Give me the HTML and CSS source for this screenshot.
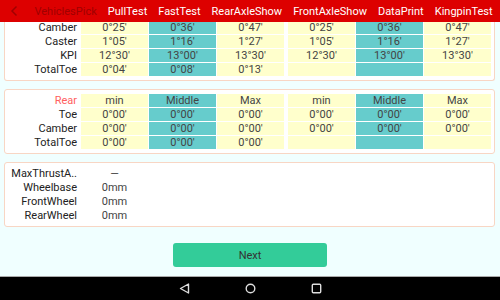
FILE: index.html
```html
<!DOCTYPE html>
<html>
<head>
    <title>FastTest</title>
    <link rel="stylesheet" href="styles.css">
</head>
<body>

<div class="topbar">
    <svg class="back" width="8" height="12" viewBox="0 0 8 12"><path d="M6.5 1.5 L2 6 L6.5 10.5" fill="none" stroke="#a00000" stroke-width="1.5"/></svg>
    <span class="tab dim">VehiclesPick</span>
    <span class="tab">PullTest</span>
    <span class="tab">FastTest</span>
    <span class="tab">RearAxleShow</span>
    <span class="tab">FrontAxleShow</span>
    <span class="tab">DataPrint</span>
    <span class="tab">KingpinTest</span>
</div>

<div class="scroll">

    <div class="card first">
        <div class="row">
            <span class="lbl">Camber</span>
            <span class="cell y">0°25'</span><span class="cell t">0°36'</span><span class="cell y">0°47'</span>
            <span class="cell y split">0°25'</span><span class="cell t">0°36'</span><span class="cell y">0°47'</span>
        </div>
        <div class="row">
            <span class="lbl">Caster</span>
            <span class="cell y">1°05'</span><span class="cell t">1°16'</span><span class="cell y">1°27'</span>
            <span class="cell y split">1°05'</span><span class="cell t">1°16'</span><span class="cell y">1°27'</span>
        </div>
        <div class="row">
            <span class="lbl">KPI</span>
            <span class="cell y">12°30'</span><span class="cell t">13°00'</span><span class="cell y">13°30'</span>
            <span class="cell y split">12°30'</span><span class="cell t">13°00'</span><span class="cell y">13°30'</span>
        </div>
        <div class="row">
            <span class="lbl">TotalToe</span>
            <span class="cell y">0°04'</span><span class="cell t">0°08'</span><span class="cell y">0°13'</span>
            <span class="cell y split"></span><span class="cell t"></span><span class="cell y"></span>
        </div>
    </div>

    <div class="card">
        <div class="row">
            <span class="lbl red">Rear</span>
            <span class="cell y">min</span><span class="cell t">Middle</span><span class="cell y">Max</span>
            <span class="cell y split">min</span><span class="cell t">Middle</span><span class="cell y">Max</span>
        </div>
        <div class="row">
            <span class="lbl">Toe</span>
            <span class="cell y">0°00'</span><span class="cell t">0°00'</span><span class="cell y">0°00'</span>
            <span class="cell y split">0°00'</span><span class="cell t">0°00'</span><span class="cell y">0°00'</span>
        </div>
        <div class="row">
            <span class="lbl">Camber</span>
            <span class="cell y">0°00'</span><span class="cell t">0°00'</span><span class="cell y">0°00'</span>
            <span class="cell y split">0°00'</span><span class="cell t">0°00'</span><span class="cell y">0°00'</span>
        </div>
        <div class="row">
            <span class="lbl">TotalToe</span>
            <span class="cell y">0°00'</span><span class="cell t">0°00'</span><span class="cell y">0°00'</span>
            <span class="cell y split"></span><span class="cell t"></span><span class="cell y"></span>
        </div>
    </div>

    <div class="card">
        <div class="row">
            <span class="lbl">MaxThrustA..</span>
            <span class="cell">—</span>
        </div>
        <div class="row">
            <span class="lbl">Wheelbase</span>
            <span class="cell">0mm</span>
        </div>
        <div class="row">
            <span class="lbl">FrontWheel</span>
            <span class="cell">0mm</span>
        </div>
        <div class="row">
            <span class="lbl">RearWheel</span>
            <span class="cell">0mm</span>
        </div>
    </div>

    <div class="actions">
        <button class="next">Next</button>
    </div>

</div>

<div class="navbar">
    <svg width="11" height="11" viewBox="0 0 11 11"><path d="M9.5 1 L9.5 10 L1.5 5.5 Z" fill="none" stroke="#ddd" stroke-width="1.4" stroke-linejoin="round"/></svg>
    <svg width="11" height="11" viewBox="0 0 11 11"><circle cx="5.5" cy="5.5" r="4.3" fill="none" stroke="#ddd" stroke-width="1.4"/></svg>
    <svg width="11" height="11" viewBox="0 0 11 11"><rect x="1.3" y="1.3" width="8.4" height="8.4" rx="1" fill="none" stroke="#ddd" stroke-width="1.4"/></svg>
</div>

</body>
</html>
```

FILE: styles.css
```css
BODY {
    margin: 0;
    width: 500px;
    height: 300px;
    overflow: hidden;
    background-color: #f0ffff;
    font-family: Roboto, "Liberation Sans", sans-serif;
    font-size: 11px;
    color: #222;
    display: flex;
    flex-direction: column;
}

.topbar {
    height: 22px;
    flex: none;
    background-color: #dd0000;
    display: flex;
    align-items: center;
    overflow: hidden;
    color: #fff;
    font-size: 11px;
}

.topbar > * {
    flex: none;
}

.topbar .back {
    margin-left: 10px;
    margin-right: 11px;
}

.tab {
    padding: 0 5.5px;
    white-space: nowrap;
}

.tab.dim {
    color: #a00000;
}

.scroll {
    flex: 1;
    overflow: hidden;
    display: flex;
    flex-direction: column;
}

.card {
    margin: 8px 5px 0 4px;
    padding: 4px 3px 4px 0;
    background-color: #fff;
    border: 1px solid #f8d6c4;
    border-radius: 3px;
    display: flex;
    flex-direction: column;
    gap: 1px;
}

.card.first {
    margin-top: -1px;
    padding-top: 0;
    border-top: 0;
    border-radius: 0 0 3px 3px;
}

.row {
    display: flex;
    gap: 1px;
    height: 13px;
    line-height: 13px;
}

.lbl {
    width: 72px;
    padding-right: 3px;
    text-align: right;
    white-space: nowrap;
}

.lbl.red {
    color: #ff6060;
}

.cell {
    width: 67px;
    text-align: center;
    color: #444;
}

.cell.y {
    background-color: #ffffcc;
}

.cell.t {
    background-color: #66cccc;
}

.cell.split {
    margin-left: 3px;
}

.actions {
    display: flex;
    justify-content: center;
    margin-top: 16px;
}

.next {
    width: 154px;
    height: 24px;
    border: 0;
    border-radius: 3px;
    background-color: #33cc99;
    color: #333;
    font-family: Roboto, "Liberation Sans", sans-serif;
    font-size: 11px;
}

.navbar {
    height: 23px;
    flex: none;
    background-color: #000;
    border-top: 1px solid #aaa;
    display: flex;
    align-items: center;
    justify-content: center;
    gap: 55px;
}
```
